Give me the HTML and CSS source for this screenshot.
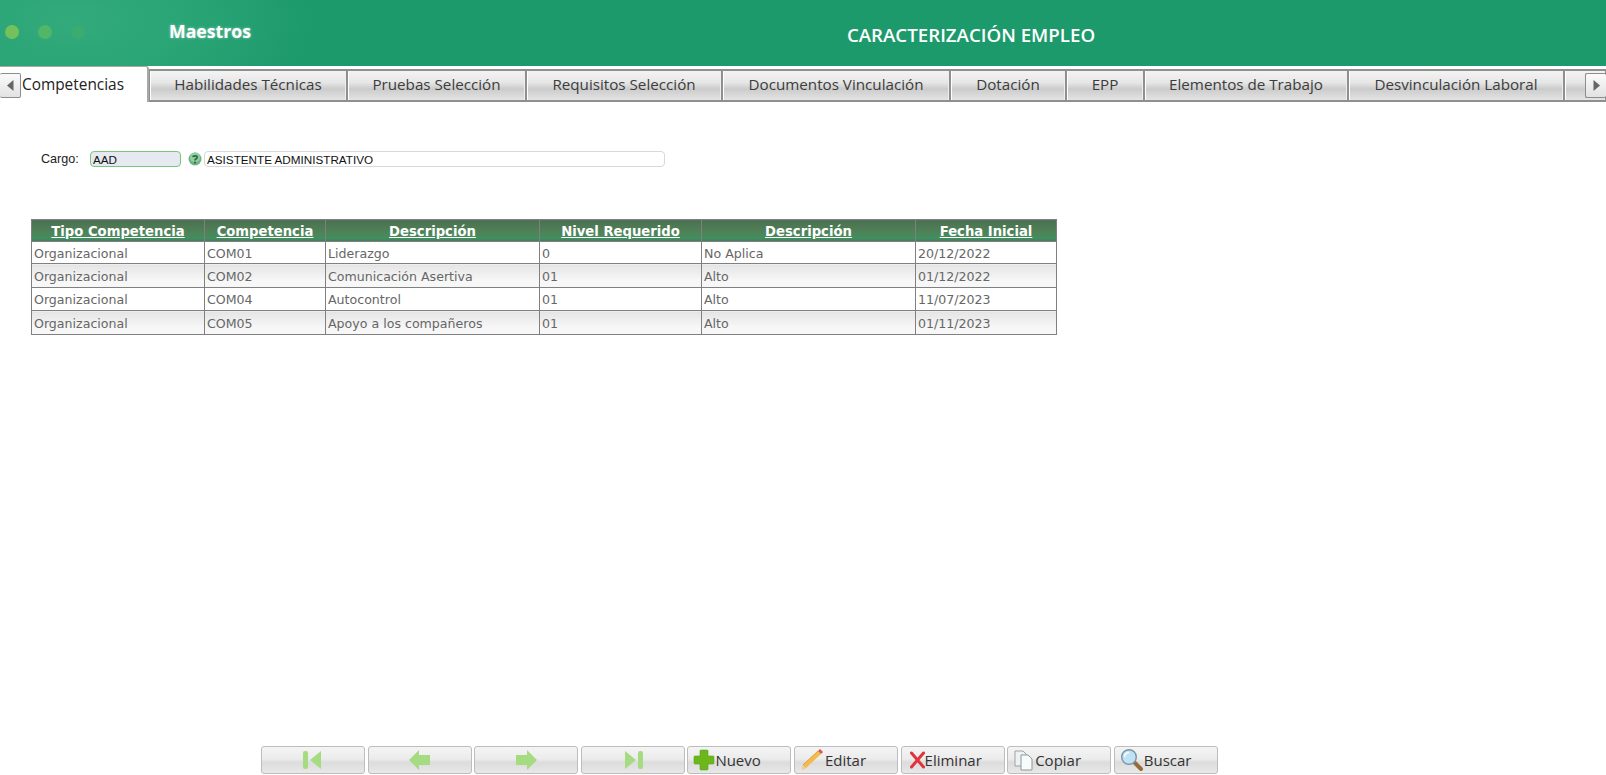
FILE: index.html
```html
<!DOCTYPE html>
<html lang="es">
<head>
<meta charset="utf-8">
<title>Caracterización Empleo</title>
<link rel="stylesheet" href="styles.css">
</head>
<body>
<div class="page">
  <header class="topbar">
    <div class="dots"><span class="dot d1"></span><span class="dot d2"></span><span class="dot d3"></span></div>
    <div class="module">Maestros</div>
    <h1 class="title">CARACTERIZACIÓN EMPLEO</h1>
  </header>
  <nav class="tabs">
    <button class="scroll scroll-left"><svg width="7" height="11" viewBox="0 0 7 11"><path d="M6.5 0v11L0 5.5z" fill="#666"/></svg></button>
    <a class="tab active t0">Competencias</a>
    <a class="tab t1">Habilidades Técnicas</a>
    <a class="tab t2">Pruebas Selección</a>
    <a class="tab t3">Requisitos Selección</a>
    <a class="tab t4">Documentos Vinculación</a>
    <a class="tab t5">Dotación</a>
    <a class="tab t6">EPP</a>
    <a class="tab t7">Elementos de Trabajo</a>
    <a class="tab t8">Desvinculación Laboral</a>
    <a class="tab t9"></a>
    <button class="scroll scroll-right"><svg width="7" height="11" viewBox="0 0 7 11"><path d="M.5 0v11L7 5.5z" fill="#666"/></svg></button>
  </nav>
  <main class="content">
    <div class="field-row">
      <label class="field-label">Cargo:</label>
      <input class="input code" value="AAD" readonly>
      <svg class="help" width="14" height="14" viewBox="0 0 14 14"><circle cx="7" cy="7" r="6.5" fill="#6fb383"/><circle cx="7" cy="5.5" r="5" fill="#8fcfa0"/><path d="M4.8 5.2C5 3.6 9.2 3.4 9.2 5.4 9.2 6.8 7 6.8 7 8.4" fill="none" stroke="#2c6a45" stroke-width="1.7"/><circle cx="7" cy="10.6" r="1.1" fill="#2c6a45"/></svg>
      <input class="input desc" value="ASISTENTE ADMINISTRATIVO" readonly>
    </div>
    <table class="grid">
      <colgroup>
        <col class="c1"><col class="c2"><col class="c3"><col class="c4"><col class="c5"><col class="c6">
      </colgroup>
      <thead>
        <tr><th><a>Tipo Competencia</a></th><th><a>Competencia</a></th><th><a>Descripción</a></th><th><a>Nivel Requerido</a></th><th><a>Descripción</a></th><th><a>Fecha Inicial</a></th></tr>
      </thead>
      <tbody>
        <tr class="short"><td>Organizacional</td><td>COM01</td><td>Liderazgo</td><td>0</td><td>No Aplica</td><td>20/12/2022</td></tr>
        <tr class="alt tall"><td>Organizacional</td><td>COM02</td><td>Comunicación Asertiva</td><td>01</td><td>Alto</td><td>01/12/2022</td></tr>
        <tr><td>Organizacional</td><td>COM04</td><td>Autocontrol</td><td>01</td><td>Alto</td><td>11/07/2023</td></tr>
        <tr class="alt tall"><td>Organizacional</td><td>COM05</td><td>Apoyo a los compañeros</td><td>01</td><td>Alto</td><td>01/11/2023</td></tr>
      </tbody>
    </table>
  </main>
  <footer class="actions">
    <button class="btn nav"><svg width="22" height="20" viewBox="0 0 22 20"><rect x="1" y="1" width="5" height="18" rx="2" fill="#a5dc82"/><path d="M8 10 19 1v18z" fill="#a5dc82"/></svg></button>
    <button class="btn nav"><svg width="24" height="20" viewBox="0 0 24 20"><path d="M1 10 11 0v5h11v10H11v5z" fill="#a5dc82"/></svg></button>
    <button class="btn nav"><svg width="24" height="20" viewBox="0 0 24 20"><path d="M23 10 13 0v5H2v10h11v5z" fill="#a5dc82"/></svg></button>
    <button class="btn nav"><svg width="22" height="20" viewBox="0 0 22 20"><rect x="16" y="1" width="5" height="18" rx="2" fill="#a5dc82"/><path d="M14 10 3 1v18z" fill="#a5dc82"/></svg></button>
    <button class="btn"><svg width="22" height="22" viewBox="0 0 22 22"><path d="M8 1h6a1 1 0 0 1 1 1v5h5a1 1 0 0 1 1 1v6a1 1 0 0 1-1 1h-5v5a1 1 0 0 1-1 1H8a1 1 0 0 1-1-1v-5H2a1 1 0 0 1-1-1V8a1 1 0 0 1 1-1h5V2a1 1 0 0 1 1-1z" fill="#6cb81c" stroke="#5a9f17" stroke-width=".6"/></svg><span>Nuevo</span></button>
    <button class="btn pad"><svg width="24" height="24" viewBox="0 0 24 24"><path d="M18 3 21 6 6 20 2 22 3 17z" fill="#f2bb4c"/><path d="M18 3 20 1 23 4 21 6z" fill="#d9534f"/><path d="M3 17 6 20 2 22z" fill="#eacda0"/><path d="M3 17 18 3" stroke="#d98f2b" stroke-width=".8"/></svg><span>Editar</span></button>
    <button class="btn del"><svg width="15" height="20" viewBox="0 0 15 20"><path d="M1.5 3 13.5 17M13.5 3 1.5 17" stroke="#e0343c" stroke-width="3" stroke-linecap="round"/></svg><span>Eliminar</span></button>
    <button class="btn pad-s"><svg width="22" height="22" viewBox="0 0 22 22"><path d="M2 2h8l3 3v12H2z" fill="#eef1f2" stroke="#9ca4a8"/><path d="M8 6h7l4 4v11H8z" fill="#f7fbfb" stroke="#8c979c"/></svg><span>Copiar</span></button>
    <button class="btn pad-s"><svg width="24" height="24" viewBox="0 0 24 24"><path d="M14 14 21 21" stroke="#9a6b3a" stroke-width="4" stroke-linecap="round"/><circle cx="9" cy="9" r="7.3" fill="#bfe3f5" stroke="#7d98a8" stroke-width="1.5"/><path d="M4.5 9A4.5 4.5 0 0 1 9 4.5" stroke="#fff" stroke-width="1.5" fill="none"/></svg><span>Buscar</span></button>
  </footer>
</div>
</body>
</html>
```

FILE: styles.css
```css
* { box-sizing: border-box; }
html, body { margin: 0; padding: 0; height: 100%; overflow: hidden; background: #fff; }
.page { height: 775px; display: flex; flex-direction: column; font-family: "Open Sans", "Noto Sans", sans-serif; }

.topbar {
  height: 66px; flex: none; display: flex; align-items: center; color: #fff;
  background: radial-gradient(ellipse 240px 130px at 70px 20px, #33aa7b 0%, #2aa576 45%, #1d9a6c 100%), #1d9a6c;
}
.dots { width: 169px; flex: none; display: flex; gap: 19px; padding-left: 5px; margin-top: -2px; }
.dot { width: 14px; height: 14px; border-radius: 50%; }
.d1 { background: #74c05c; }
.d2 { background: #52b668; }
.d3 { background: #3bac6f; }
.module { width: 167px; flex: none; font-size: 17.7px; font-weight: 700; margin-top: -4px; text-shadow: 0 0 3px rgba(255,255,255,.5); }
.title { flex: 1; margin: 3px 0 0; text-align: center; font-size: 18.7px; font-weight: 600; }

.tabs { position: relative; height: 36px; flex: none; display: flex; align-items: flex-end; }
.tab {
  height: 33px; padding-bottom: 3px; display: flex; align-items: center; justify-content: center; font-size: 15.2px; color: #3c3c3c;
  border: 2px solid #8f8f8f; border-left-width: 1px; border-right-width: 1px;
  background: linear-gradient(#f4f4f4 0%, #e6e6e6 40%, #cbcbcb 62%, #e4e4e4 100%);
  box-shadow: inset 1px 0 0 #fff, inset -1px 0 0 #eee;
}
.tab.active {
  height: 36px; padding: 0 0 0 22px; background: #fff; color: #222; border: 0; border-top: 1px solid #a8a8a8; border-right: 2px solid #a8a8a8;
  justify-content: flex-start; border-top-right-radius: 3px; box-shadow: none; font-size: 15.4px;
}
.t0 { width: 149px; }
.t1 { width: 198px; }
.t2 { width: 179px; }
.t3 { width: 196px; }
.t4 { width: 228px; }
.t5 { width: 116px; }
.t6 { width: 78px; }
.t7 { width: 204px; }
.t8 { width: 216px; }
.t9 { flex: 1; }
.scroll {
  position: absolute; top: 7px; width: 21px; height: 25px; padding: 0; display: flex; align-items: center; justify-content: center;
  background: linear-gradient(#fbfbfb, #e2e2e2); border: 1px solid #8d8d8d; border-radius: 2px;
}
.scroll-left { left: 0; border-left: 0; }
.scroll-right { right: 0; border-right: 0; }

.content { flex: 1; padding: 49px 0 0 31px; }
.field-row { display: flex; align-items: center; height: 16px; }
.field-label { width: 59px; padding-left: 10px; font: 12.6px "Liberation Sans", Arial, sans-serif; color: #222; }
.input { height: 16px; padding: 0 2px; font: 11.7px "Liberation Sans", Arial, sans-serif; color: #111; outline: 0; }
.code { width: 91px; background: #e6e9f0; border: 1px solid #7cc47c; border-radius: 4px; }
.help { margin: 0 2px 0 7px; }
.desc { width: 461px; background: #fff; border: 1px solid #d8d8d8; border-radius: 4px; }

.grid { margin-top: 52px; width: 1025px; table-layout: fixed; border-collapse: collapse; font-family: "DejaVu Sans", Tahoma, sans-serif; font-size: 12.6px; color: #666; }
.c1 { width: 173px; }
.c2 { width: 121px; }
.c3 { width: 214px; }
.c4 { width: 162px; }
.c5 { width: 214px; }
.c6 { width: 141px; }
.grid th, .grid td { border: 1px solid #808080; padding: 1px 2px 0; height: 23px; white-space: nowrap; overflow: hidden; }
.grid th { height: 22px; background: linear-gradient(#4c7050 0%, #4f8258 55%, #3f9060 85%, #46785a 100%); color: #fff; font-size: 13.2px; font-weight: 700; text-align: center; }
.grid th a { text-decoration: underline; }
.grid td { text-align: left; }
.grid .short td { height: 22px; }
.grid .tall td { height: 24px; }
.alt td { background: linear-gradient(#e4e4e4, #f7f7f7 70%); }

.actions { flex: none; height: 29px; display: flex; gap: 2.6px; padding-left: 261px; }
.btn {
  width: 104px; height: 28px; padding: 0 0 0 5px; display: flex; align-items: center; gap: 0; font: 15px "Open Sans", "Noto Sans", sans-serif; color: #333;
  background: linear-gradient(#f4f4f4 0%, #ececec 45%, #dcdcdc 60%, #e8e8e8 100%); border: 1px solid #bdbdbd; border-radius: 3px;
}
.btn.nav { justify-content: center; padding: 0; }
.btn.pad { gap: 1px; }
.btn.del { padding-left: 8px; }
.btn.pad-s { gap: 0; padding-left: 5px; }
```
